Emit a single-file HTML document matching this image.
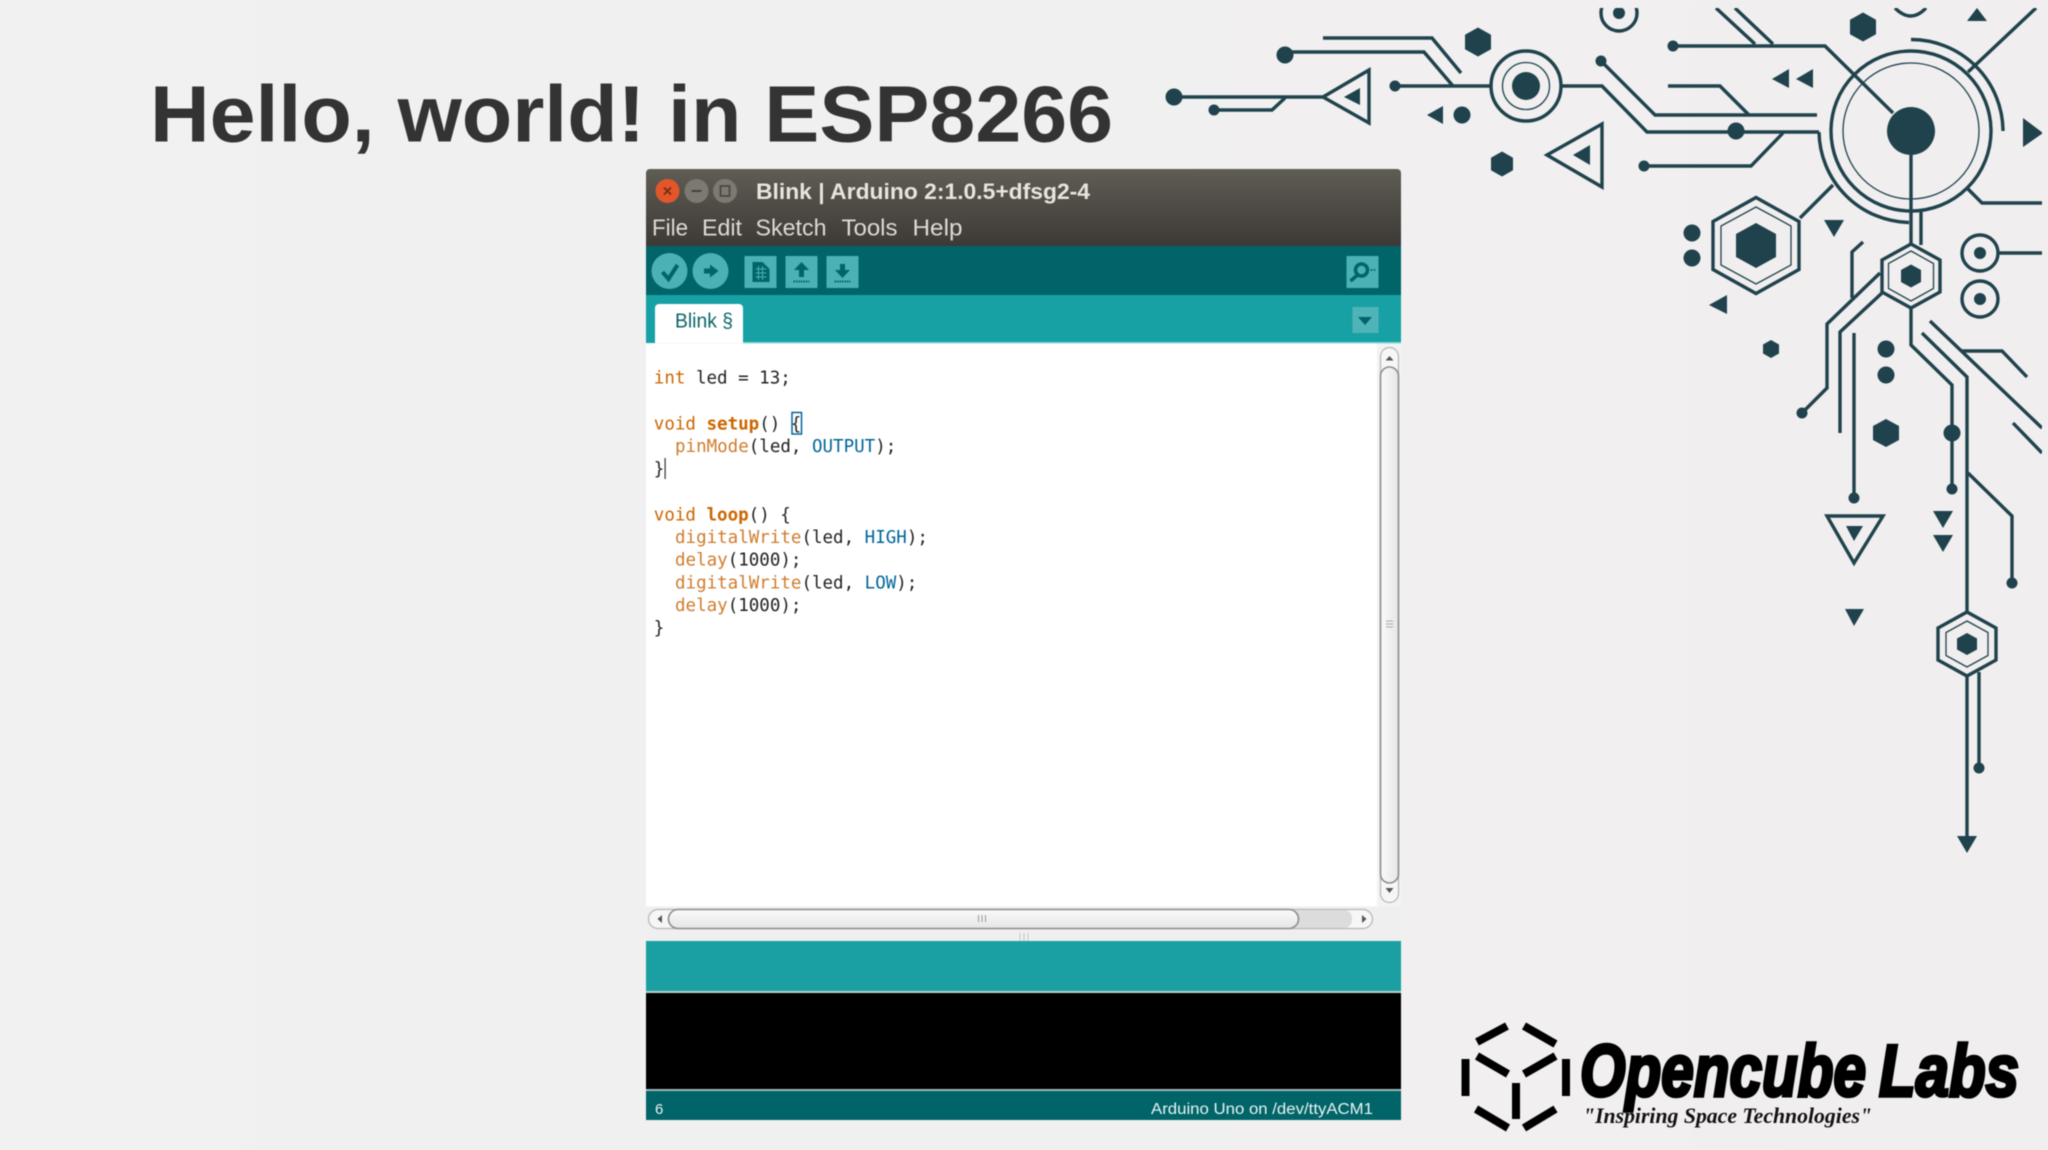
<!DOCTYPE html>
<html lang="en"><head><meta charset="utf-8"><title>Hello, world! in ESP8266</title>
<style>html,body{margin:0;padding:0;background:#f1f0f0}svg{display:block;filter:blur(0.4px)}
.code{font-family:"DejaVu Sans Mono","Liberation Mono",monospace;font-size:17.5px;fill:#222}
.k{fill:#cc6600}.f{fill:#d07c2c}.c{fill:#006699}.b{font-weight:bold;fill:#cc6600}
.ui{font-family:"Liberation Sans",sans-serif}
</style></head><body>
<svg xmlns="http://www.w3.org/2000/svg" width="2048" height="1150" viewBox="0 0 2048 1150">
<defs>
<linearGradient id="bg" x1="0" y1="0" x2="1" y2="0"><stop offset="0" stop-color="#f1f1f1"/><stop offset="0.55" stop-color="#f1f0f0"/><stop offset="1" stop-color="#f1eeef"/></linearGradient>
<linearGradient id="tb" x1="0" y1="0" x2="0" y2="1"><stop offset="0" stop-color="#5f5d55"/><stop offset="1" stop-color="#3d3936"/></linearGradient>
<linearGradient id="sb" x1="0" y1="0" x2="0" y2="1"><stop offset="0" stop-color="#fafafa"/><stop offset="1" stop-color="#e6e6e6"/></linearGradient>
<linearGradient id="sv" x1="0" y1="0" x2="1" y2="0"><stop offset="0" stop-color="#fafafa"/><stop offset="1" stop-color="#e6e6e6"/></linearGradient>
<clipPath id="cc"><rect x="1100" y="8" width="942" height="900"/></clipPath>
</defs>
<rect width="2048" height="1150" fill="url(#bg)"/>

<text class="ui" x="150" y="141.500" font-size="80" font-weight="bold" fill="#333333" textLength="963" lengthAdjust="spacingAndGlyphs">Hello, world! in ESP8266</text>

<!-- circuit decoration -->
<g clip-path="url(#cc)">
<g fill="none" stroke="#1f424c" stroke-width="3.400">
<path d="M1323,38H1432L1461,73"/>
<path d="M1285,52H1424L1453,86"/>
<path d="M1395,86H1491"/>
<path d="M1174,97H1323"/>
<path d="M1214,110H1272L1285,98"/>
<path d="M1323,97L1369,70V123Z"/>
<path d="M1562,86H1602L1647,132H1819"/>
<path d="M1601,61L1655,115H1817"/>
<path d="M1819,132A92,92 0 0 0 1909,222.500"/>
<path d="M1911,39.500A92,92 0 0 1 2003,131"/>
<path d="M1673,46H1825L1893,113"/>
<path d="M1716,8L1755,44"/><path d="M1735,8L1773,44"/>
<path d="M2036,8L1968,72"/>
<path d="M1668,86H1720L1749,115"/>
<path d="M1783,133L1751,166H1643"/>
<path d="M1911,155V243"/><path d="M1921,210V245"/>
<path d="M1968,189L1982,203H2042"/>
<path d="M1833,185L1800,218"/>
<path d="M1999,253H2042"/>
<path d="M1863,242L1852,252V298"/>
<path d="M1880,273L1827,324V388L1802,413"/>
<path d="M1882,293L1840,332V433"/>
<path d="M1854,333V498"/>
<path d="M1911,309V345L1952,385V489"/>
<path d="M1922,333L1967,377V611"/>
<path d="M1930,321L2042,428"/>
<path d="M1962,351H2002L2027,377"/>
<path d="M2013,423L2042,453"/>
<path d="M1968,473L2012,516V583"/>
<path d="M1967,677V840"/><path d="M1979,672V768"/>
<path d="M1827,516H1883L1854,563Z"/>
<path d="M1547,155L1602,124V187Z"/>
<circle cx="1526" cy="86" r="35"/>
<circle cx="1911" cy="131" r="80"/>
<circle cx="1980" cy="253" r="18"/><circle cx="1980" cy="299" r="18"/>
<circle cx="1619" cy="13" r="18"/>
<path d="M1895,8Q1911,24 1926,8"/>
<polygon points="1756,197.500 1799,221.500 1799,269.500 1756,293.500 1713,269.500 1713,221.500"/>
<polygon points="1911,244 1940,260 1940,292 1911,308 1882,292 1882,260"/>
<polygon points="1967,612 1996,628 1996,660 1967,676 1938,660 1938,628"/>
</g>
<g fill="none" stroke="#1f424c" stroke-width="1.300">
<circle cx="1526" cy="86" r="23.500"/>
<circle cx="1911" cy="131" r="68"/>
<polygon points="1756,207 1791,226 1791,265 1756,284 1721,265 1721,226"/>
<polygon points="1911,251 1933.500,263.500 1933.500,288.500 1911,301 1888.500,288.500 1888.500,263.500"/>
<polygon points="1967,621 1988,632.500 1988,655.500 1967,667 1946,655.500 1946,632.500"/>
</g>
<g fill="#1f424c">
<circle cx="1526" cy="86" r="14"/><circle cx="1911" cy="131" r="24"/>
<circle cx="1980" cy="253" r="6"/><circle cx="1980" cy="299" r="6"/><circle cx="1619" cy="13" r="6"/>
<circle cx="1285" cy="55" r="8.500"/><circle cx="1174" cy="97" r="8.500"/><circle cx="1214" cy="110" r="5.500"/>
<circle cx="1395" cy="86" r="5.500"/><circle cx="1462" cy="115" r="8.500"/><circle cx="1601" cy="61" r="5.500"/>
<circle cx="1644" cy="166" r="5.500"/><circle cx="1673" cy="46" r="5.500"/><circle cx="1736" cy="131" r="8.500"/>
<circle cx="1692" cy="233" r="8.500"/><circle cx="1692" cy="258" r="8.500"/>
<circle cx="1802" cy="413" r="5.500"/><circle cx="1854" cy="498" r="5.500"/>
<circle cx="1886" cy="349" r="8.500"/><circle cx="1886" cy="375" r="8.500"/>
<circle cx="1952" cy="433" r="8.500"/><circle cx="1952" cy="489" r="5.500"/>
<circle cx="2012" cy="583" r="5.500"/><circle cx="1979" cy="768" r="5.500"/>
<polygon points="1344,97 1360,88 1360,105"/><polygon points="1427,115 1443,106 1443,124"/>
<polygon points="1573,155 1590,145 1590,165"/>
<polygon points="1772,79 1789,69 1789,88"/><polygon points="1796,79 1813,69 1813,88"/>
<polygon points="1967,21 1987,21 1977,8"/><polygon points="2023,118 2043,133 2023,147"/>
<polygon points="1824,220 1844,220 1834,237"/><polygon points="1709,305 1727,295 1727,314"/>
<polygon points="1846,526 1863,526 1854,541"/>
<polygon points="1933,511 1953,511 1943,528"/><polygon points="1933,535 1953,535 1943,552"/>
<polygon points="1845,609 1864,609 1854,626"/><polygon points="1957,836 1977,836 1967,853"/>
<polygon points="1756,223 1776,234 1776,257 1756,268 1736,257 1736,234"/>
<polygon points="1911,264.500 1921,270 1921,282 1911,287.500 1901,282 1901,270"/>
<polygon points="1967,633 1977,638.500 1977,649.500 1967,655 1957,649.500 1957,638.500"/>
<polygon points="1863,12.500 1876,19.750 1876,34.250 1863,41.500 1850,34.250 1850,19.750"/>
<polygon points="1771,340 1779,344.500 1779,353.500 1771,358 1763,353.500 1763,344.500"/>
<polygon points="1886,419 1899,426 1899,440 1886,447 1873,440 1873,426"/>
<polygon points="1478,27.500 1491,34.750 1491,49.250 1478,56.500 1465,49.250 1465,34.750"/>
<polygon points="1502,151.500 1513,157.750 1513,170.250 1502,176.500 1491,170.250 1491,157.750"/>
</g>
</g>

<!-- window -->
<rect x="646" y="169" width="755" height="951" fill="#efefef"/>
<path d="M646,246V173a4,4 0 0 1 4,-4H1397a4,4 0 0 1 4,4V246Z" fill="url(#tb)"/>
<circle cx="667.500" cy="191" r="12" fill="#e2562a"/>
<path d="M664,187.500l7,7m0,-7l-7,7" stroke="#7d2a10" stroke-width="1.800"/>
<circle cx="696.500" cy="191" r="12" fill="#7c7a70"/>
<path d="M691.500,191h10" stroke="#45433d" stroke-width="2"/>
<circle cx="725" cy="191" r="12" fill="#7c7a70"/>
<rect x="720.500" y="186" width="9" height="10" fill="none" stroke="#45433d" stroke-width="1.600"/>
<text class="ui" x="756" y="199" font-size="22" font-weight="bold" fill="#e9e5dc" textLength="334" lengthAdjust="spacingAndGlyphs">Blink | Arduino 2:1.0.5+dfsg2-4</text>
<g class="ui" font-size="23" fill="#dedbd4">
<text x="652" y="235.500" textLength="36" lengthAdjust="spacingAndGlyphs">File</text>
<text x="702" y="235.500" textLength="40" lengthAdjust="spacingAndGlyphs">Edit</text>
<text x="755.500" y="235.500" textLength="71" lengthAdjust="spacingAndGlyphs">Sketch</text>
<text x="841.500" y="235.500" textLength="56" lengthAdjust="spacingAndGlyphs">Tools</text>
<text x="912.500" y="235.500" textLength="50" lengthAdjust="spacingAndGlyphs">Help</text>
</g>

<!-- toolbar -->
<rect x="646" y="246" width="755" height="49" fill="#006468"/>
<g fill="#4bb1b4">
<circle cx="669.500" cy="271" r="18"/><circle cx="710.500" cy="271" r="18"/>
<rect x="744.500" y="256" width="32" height="32"/><rect x="785.500" y="256" width="32" height="32"/>
<rect x="826.500" y="256" width="32" height="32"/><rect x="1346.500" y="256" width="32" height="32"/>
</g>
<path d="M662.500,272l6,7l9,-14" fill="none" stroke="#006468" stroke-width="4"/>
<path d="M704,268.500h6v-4l8.500,6.500l-8.500,6.500v-4h-6z" fill="#006468"/>
<path d="M752.500,262h10l7,7v13h-17z" fill="#006468"/>
<path d="M755.500,269h11M755.500,273h11M755.500,277h11M758.500,266v14M762.500,266v14" stroke="#4bb1b4" stroke-width="1"/>
<path d="M801.500,262l7.500,8h-5v7h-5v-7h-5z" fill="#006468"/>
<path d="M793.500,281.500h16" stroke="#006468" stroke-width="2" stroke-dasharray="1.500 1"/>
<path d="M842.500,278l7.500,-8h-5v-6h-5v6h-5z" fill="#006468"/>
<path d="M834.500,281.500h16" stroke="#006468" stroke-width="2" stroke-dasharray="1.500 1"/>
<circle cx="1361.500" cy="270" r="6" fill="none" stroke="#006468" stroke-width="3.500"/>
<path d="M1357.500,275l-7,6" stroke="#006468" stroke-width="3.500"/>
<path d="M1370.500,270h5" stroke="#006468" stroke-width="1.500" stroke-dasharray="2 1"/>

<!-- tab bar -->
<rect x="646" y="295" width="755" height="48" fill="#17a1a5"/>
<path d="M655,343V308a4,4 0 0 1 4,-4H739a4,4 0 0 1 4,4V343Z" fill="#fff"/>
<text class="ui" x="675" y="327.500" font-size="20" fill="#0b666a" textLength="58" lengthAdjust="spacingAndGlyphs">Blink §</text>
<rect x="1352.500" y="307" width="26" height="26" fill="#4fb4b7"/>
<path d="M1358,317h14l-7,8z" fill="#006468"/>
<rect x="743" y="342" width="658" height="1.500" fill="#7fd8d8"/>

<!-- editor -->
<rect x="646" y="343.500" width="731" height="563" fill="#fff"/>
<rect x="1377" y="343.500" width="24" height="563" fill="#f3f3f3"/>
<g class="code">
<text x="653.800" y="383.700"><tspan class="k">int</tspan> led = 13;</text>
<text x="653.800" y="429.700"><tspan class="k">void</tspan> <tspan class="b">setup</tspan>() {</text>
<text x="675" y="452.200"><tspan class="f">pinMode</tspan>(led, <tspan class="c">OUTPUT</tspan>);</text>
<text x="653.800" y="474.700">}</text>
<text x="653.800" y="520.700"><tspan class="k">void</tspan> <tspan class="b">loop</tspan>() {</text>
<text x="675" y="543.200"><tspan class="f">digitalWrite</tspan>(led, <tspan class="c">HIGH</tspan>);</text>
<text x="675" y="565.700"><tspan class="f">delay</tspan>(1000);</text>
<text x="675" y="588.700"><tspan class="f">digitalWrite</tspan>(led, <tspan class="c">LOW</tspan>);</text>
<text x="675" y="611.200"><tspan class="f">delay</tspan>(1000);</text>
<text x="653.800" y="633.700">}</text>
</g>
<rect x="792" y="412.500" width="9.500" height="21.500" fill="none" stroke="#006699" stroke-width="1.500"/>
<rect x="664.500" y="458" width="1.200" height="21" fill="#333"/>

<!-- vertical scrollbar -->
<rect x="1380.500" y="347.500" width="18" height="555" rx="9" fill="#f6f6f6" stroke="#b5b5b5" stroke-width="1.200"/>
<rect x="1380.500" y="367" width="18" height="516" rx="9" fill="url(#sv)" stroke="#8d8d8d" stroke-width="1.600"/>
<path d="M1385.500,360.500l4,-4.500l4,4.500z" fill="#555"/>
<path d="M1385.500,888l4,5l4,-5z" fill="#555"/>
<path d="M1386,621h7M1386,624h7M1386,627h7" stroke="#aaa" stroke-width="1"/>

<!-- horizontal scrollbar -->
<rect x="648.500" y="909.500" width="724" height="19" rx="9.500" fill="#f6f6f6" stroke="#b5b5b5" stroke-width="1.200"/>
<rect x="1290" y="910" width="62" height="18" rx="8" fill="#dcdcdc"/>
<rect x="668.500" y="909.500" width="630" height="19" rx="9.500" fill="url(#sb)" stroke="#8d8d8d" stroke-width="1.600"/>
<path d="M662,915l-4.500,4l4.500,4z" fill="#555"/>
<path d="M1362,915l4.500,4l-4.500,4z" fill="#555"/>
<path d="M978.500,915v7M982,915v7M985.500,915v7" stroke="#999" stroke-width="1"/>
<path d="M1020,933v8M1024,933v8M1028,933v8" stroke="#c6c6c6" stroke-width="1"/>

<!-- console -->
<rect x="646" y="941" width="755" height="50" fill="#1a9fa2"/>
<rect x="646" y="991" width="755" height="2" fill="#b9cfcf"/>
<rect x="646" y="993" width="755" height="96" fill="#000"/>
<rect x="646" y="1089" width="755" height="2" fill="#9fb8b8"/>
<rect x="646" y="1091" width="755" height="29" fill="#006468"/>
<text class="ui" x="655" y="1114" font-size="15" fill="#e8f4f4">6</text>
<text class="ui" x="1151" y="1114" font-size="15.500" fill="#e8f4f4" textLength="222" lengthAdjust="spacingAndGlyphs">Arduino Uno on /dev/ttyACM1</text>

<!-- logo -->
<g stroke="#000" stroke-width="8" fill="none">
<path d="M1477,1042L1507,1026"/><path d="M1524,1026L1555.500,1044"/>
<path d="M1477,1056L1508,1074"/><path d="M1555.500,1056L1524,1074"/>
<path d="M1465.500,1059V1096"/><path d="M1566,1059V1096"/><path d="M1516,1083V1119"/>
<path d="M1476,1109L1508,1128"/><path d="M1555.500,1109L1524,1128"/>
</g>
<g class="ui" font-size="73" font-weight="bold" font-style="italic" fill="#000" stroke="#000" stroke-width="3.500">
<text x="1580" y="1096" textLength="286" lengthAdjust="spacingAndGlyphs">Opencube</text>
<text x="1879" y="1096" textLength="140" lengthAdjust="spacingAndGlyphs">Labs</text>
</g>
<text x="1583" y="1123" font-family="'Liberation Serif',serif" font-size="22" font-style="italic" font-weight="bold" fill="#111" textLength="289" lengthAdjust="spacingAndGlyphs">"Inspiring Space Technologies"</text>
</svg>
</body></html>
